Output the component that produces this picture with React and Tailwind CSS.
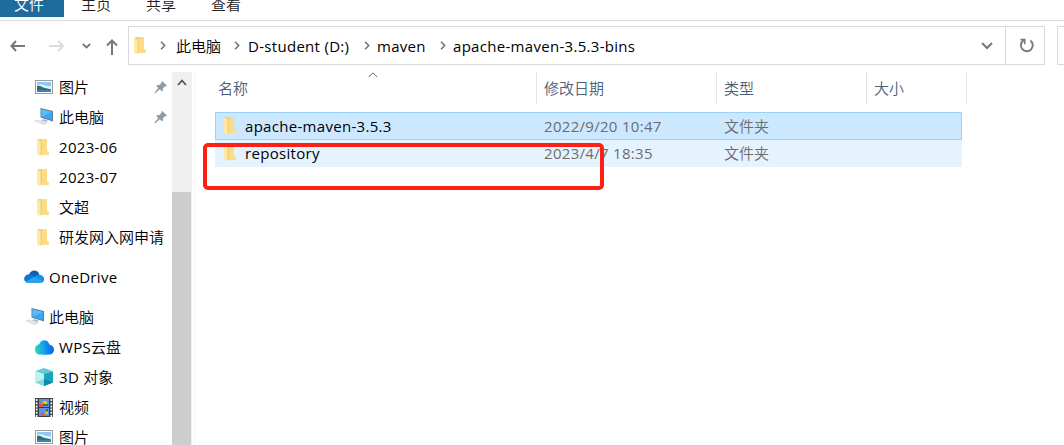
import { clsx } from "clsx";

const TABS = ["主页", "共享", "查看"];

const CRUMBS = [
  { label: "此电脑", box: "ml-[10px] w-[45px]" },
  { label: "D-student (D:)", box: "ml-[8px] w-[103px]" },
  { label: "maven", box: "ml-[7px] w-[50px]" },
  { label: "apache-maven-3.5.3-bins", box: "ml-[7px] w-[192px]" },
];

const QUICK_ACCESS = [
  { label: "图片", icon: "picture", pinned: true },
  { label: "此电脑", icon: "computer", pinned: true },
  { label: "2023-06", icon: "folder" },
  { label: "2023-07", icon: "folder" },
  { label: "文超", icon: "folder" },
  { label: "研发网入网申请", icon: "folder" },
];

const THIS_PC = [
  { label: "WPS云盘", icon: "wps" },
  { label: "3D 对象", icon: "cube" },
  { label: "视频", icon: "video" },
  { label: "图片", icon: "picture" },
];

const FILES = [
  { name: "apache-maven-3.5.3", date: "2022/9/20 10:47", type: "文件夹", selected: true },
  { name: "repository", date: "2023/4/7 18:35", type: "文件夹" },
];

function FolderIcon({ className }) {
  return (
    <svg width="14" height="18" viewBox="0 0 14 18" className={clsx("shrink-0", className)}>
      <path d="M2 0h9v12.500h1.500V16H3z" fill="#f3d071" />
      <path d="M6 0h5v12.500h1.500V16H6z" fill="#fadd86" />
      <path d="M1 .5l3.500 2V17.500l-3.500-2z" fill="#ffe9a8" />
    </svg>
  );
}

function PictureIcon() {
  return (
    <svg width="18" height="14" viewBox="0 0 18 14" className="shrink-0">
      <rect x=".5" y=".5" width="17" height="13" fill="#fff" stroke="#9a9a9a" />
      <rect x="2" y="2" width="14" height="10" fill="#8fc6f3" />
      <path d="M2 5c2-1 5-1 8 .5l6 1V9L2 7z" fill="#e4f3fb" />
      <path d="M2 6c2-.5 4 0 6 1.500l8 2V11H2z" fill="#2f6f68" />
      <path d="M2 10h14v2H2z" fill="#3f7fb8" />
    </svg>
  );
}

function ComputerIcon() {
  return (
    <svg width="20" height="18" viewBox="0 0 20 18" className="shrink-0">
      <path d="M6.500 0L19 3v10.500L6.500 9.500z" fill="#5d7f9b" />
      <path d="M7.500 1.300L18 3.900v8.200L7.500 8.700z" fill="#37a9f3" />
      <path d="M7.500 1.300L18 3.900 7.500 8.700z" fill="#5bbcf8" />
      <path d="M9 11l5 1.500-2 2-5-1.500z" fill="#b3bcc2" />
      <path d="M0 13l3.500-1.500L14 14.500 10 17z" fill="#d3d8db" />
      <path d="M2 13.200l9 2.300M4 12.300l8 2.200" stroke="#f4f5f6" strokeWidth=".6" />
    </svg>
  );
}

function OneDriveIcon() {
  return (
    <svg width="20" height="14" viewBox="0 0 20 14" className="shrink-0">
      <path d="M5 5C6-.5 14-1.500 15.500 5L9 9z" fill="#0a62b8" />
      <path d="M4.500 13C-1 13-1.500 5.500 4 4.500c2-.5 4 .2 5.500 1.500L14 9l-7 4z" fill="#1078d4" />
      <path d="M14 5.200c2.500-.8 6 .6 6 4.300 0 2-1.500 3.500-3.500 3.500H5c-1.200 0-2.500-.5-3.200-1.500L10 7z" fill="#28a5ea" />
      <path d="M10.500 6.500l3-1.200c3-1 6.500 1 6.500 4.200 0 .8-.3 1.500-.7 2z" fill="#1490df" />
    </svg>
  );
}

function WpsIcon() {
  return (
    <svg width="19" height="15" viewBox="0 0 19 15" className="shrink-0">
      <defs>
        <linearGradient id="wps-back">
          <stop offset="0" stopColor="#18b7f7" />
          <stop offset="1" stopColor="#0863e8" />
        </linearGradient>
        <linearGradient id="wps-front">
          <stop offset="0" stopColor="#25dcb6" />
          <stop offset="1" stopColor="#168bf8" />
        </linearGradient>
      </defs>
      <path d="M4 5C5-1 13-1.500 14.500 4.500 17 5 19 7 19 9.700c0 3-2 4.800-4.500 4.800H7z" fill="url(#wps-back)" />
      <path d="M5 4.300c4 0 5 3 5 5.500 0 2 1 4 3 4.700H5C2 14.500 0 12.500 0 9.500 0 6.500 2 4.300 5 4.300z" fill="url(#wps-front)" />
    </svg>
  );
}

function CubeIcon() {
  return (
    <svg width="18" height="18" viewBox="0 0 18 18" className="shrink-0">
      <path d="M0 3.200L9 0l9 3.200-9 3z" fill="#62cbd4" />
      <path d="M0 3.200L9 6v12l-9-3.500z" fill="#c2f0f1" />
      <path d="M18 3.200L9 6v12l9-3.500z" fill="#18a5bd" />
      <path d="M0 14.500L9 11v7z" fill="#83d9df" />
      <path d="M9 11l9 3.500L9 18z" fill="#078ba7" />
    </svg>
  );
}

function VideoIcon() {
  return (
    <svg width="18" height="19" viewBox="0 0 18 19" className="shrink-0">
      <path d="M0 0h18v19H0z" fill="#3b3b3b" />
      <path d="M4 1h10v8H4zM4 10h10v8H4z" fill="#5c94e8" />
      <path d="M1.700 1v18M16.300 1v18" stroke="#eee" strokeWidth="1.800" strokeDasharray="2 1.200" />
      <path d="M4 6h4v3H4zM6 15h4v3H6z" fill="#e2574c" />
      <path d="M8 3h4v3H8zM10 14h3v2h-3z" fill="#f2c31c" />
      <path d="M8 6h5v2H8zM11 11h2v2h-2z" fill="#457a25" />
      <path d="M7 4h2v2H7zM9 15h2v2H9z" fill="#ef8b22" />
    </svg>
  );
}

const ICONS = {
  folder: FolderIcon,
  picture: PictureIcon,
  computer: ComputerIcon,
  wps: WpsIcon,
  cube: CubeIcon,
  video: VideoIcon,
};

function PinIcon() {
  return (
    <svg width="13" height="13" viewBox="0 0 13 13" className="shrink-0">
      <path d="M8 0l5 4.500-1 1-1-.3-2 2c.2 1.500-.2 2.500-1 3.300L5.800 8.300 1 12.500l-.7-.6L4.200 7 2 4.800C3 4 4 3.800 5.300 4l2.300-2.200-.3-1z" fill="#8f9ca5" />
    </svg>
  );
}

function Chevron({ d, width, height, className, stroke = 2 }) {
  return (
    <svg width={width} height={height} viewBox={`0 0 ${width} ${height}`} fill="none" stroke="currentColor" strokeWidth={stroke} className={clsx("shrink-0", className)}>
      <path d={d} />
    </svg>
  );
}

/* Latin runs are tracked out a little, Chinese runs keep their full-width pitch */
function Label({ text }) {
  return text.split(/([\u4e00-\u9fff]+)/).map((part, i) => (
    <span key={i} className={i % 2 ? "font-[350]" : "font-normal tracking-[0.3px]"}>{part}</span>
  ));
}

function TreeItem({ label, icon, pinned }) {
  const Icon = ICONS[icon];
  return (
    <div className="flex h-[30px] items-center pl-[34px] pr-[5px]">
      <span className={clsx("flex w-[20px]", icon === "folder" ? "pl-[2px] pt-[2px]" : "justify-center")}>
        <Icon />
      </span>
      <span className="ml-[5px] flex-1 whitespace-pre"><Label text={label} /></span>
      {pinned && <PinIcon />}
    </div>
  );
}

function Ribbon() {
  return (
    <div className="flex h-[21px] items-start border-b border-[#dadbdc] font-[350] leading-[9px] text-[#222]">
      <div className="h-[17px] w-[64px] bg-[#1e6c9e] pl-[14px] text-white">文件</div>
      {TABS.map((tab) => (
        <div key={tab} className="w-[65px] pl-[17px]">{tab}</div>
      ))}
    </div>
  );
}

function AddressBar() {
  return (
    <div className="flex h-[51px] pt-[5px]">
      <div className="flex h-[39px] w-[128px] items-center pl-[10px] text-[#777]">
        <Chevron width={16} height={12} d="M6 1L1.500 6 6 11M1.500 6H15" />
        <Chevron width={16} height={12} d="M9 1l5 5-5 5M0 6h13.500" className="ml-[23px] text-[#dcdcdc]" />
        <Chevron width={9} height={6} d="M.8 1l3.700 3.500L8.200 1" className="ml-[17px]" stroke={1.8} />
        <Chevron width={12} height={16} d="M1 6.500L6 1.500l5 5M6 2v14" className="ml-[15px] mt-[3px]" />
      </div>
      <div className="flex h-[39px] w-[878px] items-center border border-[#d9d9d9] pl-[4px]">
        <FolderIcon className="mt-px" />
        {CRUMBS.map((crumb) => (
          <div key={crumb.label} className="flex items-center">
            <Chevron width={6} height={9} d="M1 .8l3.700 3.700L1 8.200" className="ml-[13px] text-[#777]" stroke={1.6} />
            <span className={clsx("whitespace-nowrap", crumb.box)}><Label text={crumb.label} /></span>
          </div>
        ))}
        <Chevron width={12} height={8} d="M1 1l5 5 5-5" className="ml-auto mr-[12px] text-[#777]" />
      </div>
      <div className="flex h-[39px] w-[39px] items-center justify-center border border-l-0 border-[#d9d9d9]">
        <svg width="15" height="15" viewBox="0 0 15 15" className="ml-[2px]" fill="none" stroke="#777" strokeWidth="1.900">
          <path d="M11.300 2.500A5.900 5.900 0 1 1 4.700 2.300" />
          <path d="M1.500 1.600h4.200v4.600" strokeWidth="1.600" />
        </svg>
      </div>
      <div className="ml-[12px] h-[39px] flex-1 border border-r-0 border-[#d9d9d9]" />
    </div>
  );
}

function Sidebar() {
  return (
    <div className="flex w-[195px] shrink-0 border-r border-[#f5f5f5]">
      <div className="w-[172px] whitespace-nowrap">
        {QUICK_ACCESS.map((item) => (
          <TreeItem key={item.label} {...item} />
        ))}
        <div className="mt-[10px] flex h-[30px] items-center pl-[24px]">
          <OneDriveIcon />
          <span className="ml-[5px]"><Label text="OneDrive" /></span>
        </div>
        <div className="mt-[10px] flex h-[30px] items-center pl-[25px]">
          <ComputerIcon />
          <span className="ml-[4px]"><Label text="此电脑" /></span>
        </div>
        {THIS_PC.map((item) => (
          <TreeItem key={item.label} {...item} />
        ))}
      </div>
      <div className="w-[20px] bg-[#f0f0f0]">
        <div className="flex h-[120px] justify-center pt-[7px] text-[#555]">
          <Chevron width={10} height={7} d="M1 6l4-4.500L9 6" stroke={1.8} />
        </div>
        <div className="h-[260px] w-[19px] bg-[#cdcdcd]" />
      </div>
    </div>
  );
}

function FileList() {
  return (
    <div className="flex-1 pl-[20px]">
      <div className="flex h-[32px] items-center font-[350] text-[#4c607a]">
        <div className="relative h-full w-[322px] border-r border-[#e5e5e5] pl-[3px] leading-[32px]">
          名称
          <Chevron width={10} height={6} d="M.8 5L5 .8 9.200 5" stroke={1} className="absolute left-[153px] top-0 text-[#666]" />
        </div>
        <div className="h-full w-[180px] border-r border-[#e5e5e5] pl-[7px] leading-[32px]">修改日期</div>
        <div className="h-full w-[150px] border-r border-[#e5e5e5] pl-[7px] leading-[32px]">类型</div>
        <div className="h-full w-[100px] border-r border-[#e5e5e5] pl-[7px] leading-[32px]">大小</div>
      </div>
      <div className="mt-[8px] w-[747px] text-[#6d6d6d]">
        {FILES.map((file) => (
          <div
            key={file.name}
            className={clsx(
              "flex items-center",
              file.selected ? "h-[28px] border border-[#99d1ff] bg-[#cce8ff] pl-[7px]" : "h-[27px] bg-[#e5f3ff] pb-px pl-[8px]"
            )}
          >
            <FolderIcon />
            <span className="ml-[8px] w-[299px] text-black"><Label text={file.name} /></span>
            <span className="w-[180px]"><Label text={file.date} /></span>
            <span><Label text={file.type} /></span>
          </div>
        ))}
      </div>
    </div>
  );
}

function App() {
  return (
    <div className="relative flex h-[445px] w-[1064px] flex-col overflow-hidden bg-white font-['Open_Sans','Noto_Sans_CJK_SC',sans-serif] text-[15px] leading-[20px] text-black">
      <Ribbon />
      <AddressBar />
      <div className="flex h-[373px]">
        <Sidebar />
        <FileList />
      </div>
      {/* Highlight box over the repository row */}
      <div className="absolute left-[203px] top-[143px] h-[47px] w-[401px] rounded-[5px] border-4 border-[#ff2015]" />
    </div>
  );
}

export default App;
